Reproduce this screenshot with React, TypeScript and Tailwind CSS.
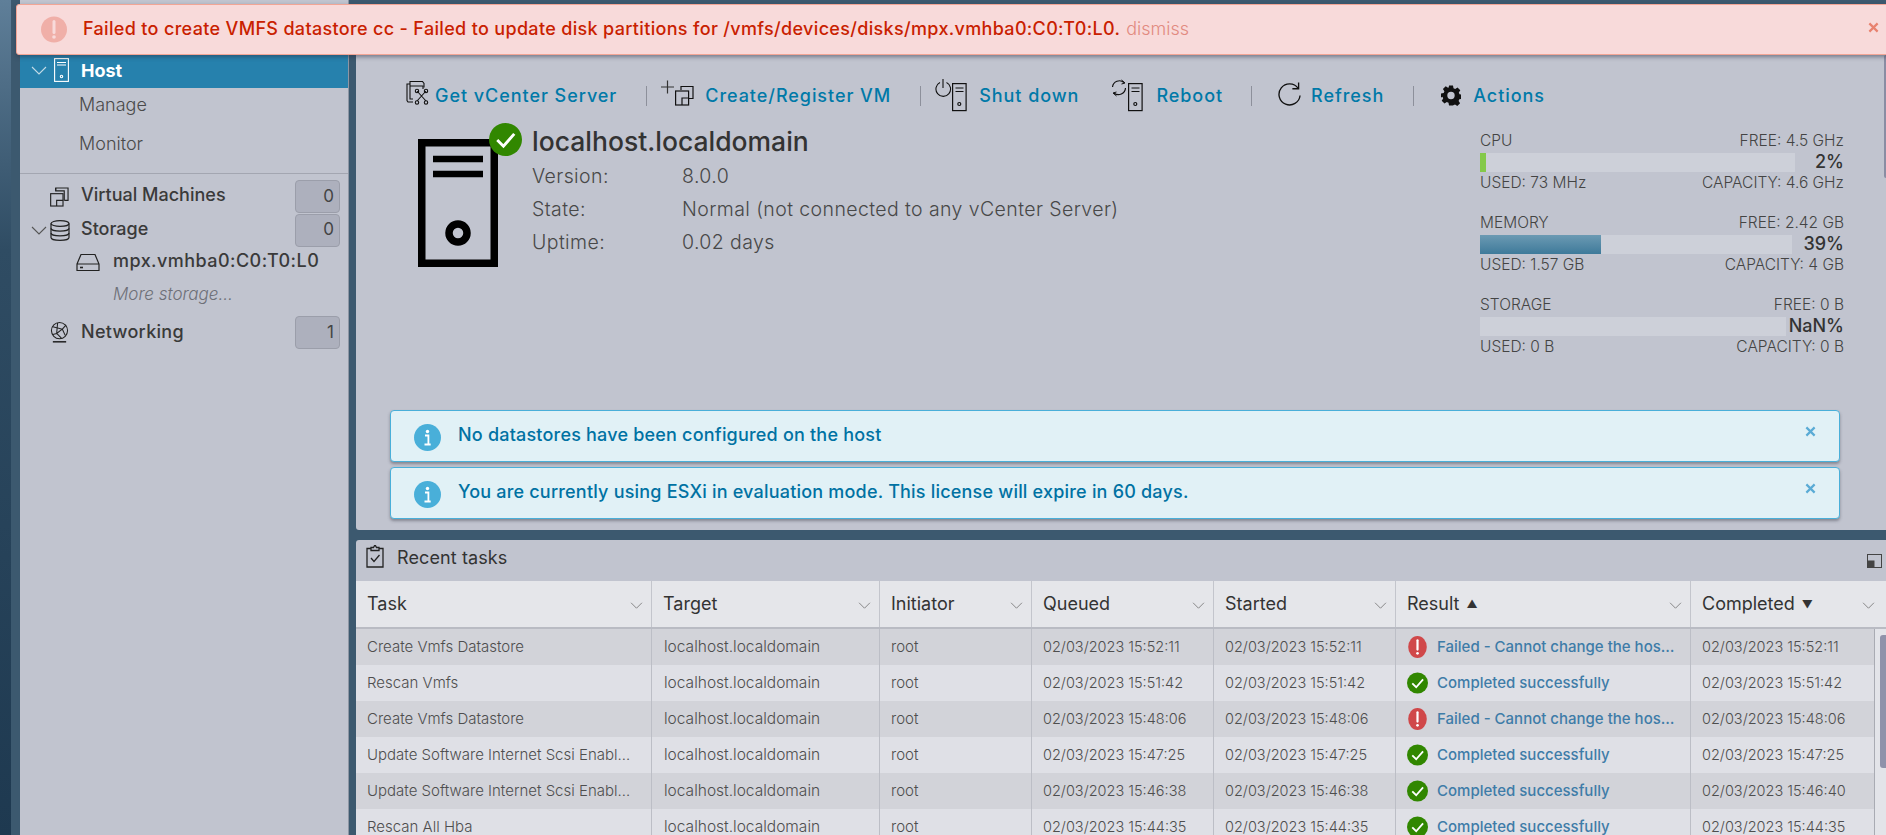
import React from "react";

const rows = [
  ["Create Vmfs Datastore", "02/03/2023 15:52:11", "02/03/2023 15:52:11", "fail", "02/03/2023 15:52:11"],
  ["Rescan Vmfs", "02/03/2023 15:51:42", "02/03/2023 15:51:42", "ok", "02/03/2023 15:51:42"],
  ["Create Vmfs Datastore", "02/03/2023 15:48:06", "02/03/2023 15:48:06", "fail", "02/03/2023 15:48:06"],
  ["Update Software Internet Scsi Enabl…", "02/03/2023 15:47:25", "02/03/2023 15:47:25", "ok", "02/03/2023 15:47:25"],
  ["Update Software Internet Scsi Enabl…", "02/03/2023 15:46:38", "02/03/2023 15:46:38", "ok", "02/03/2023 15:46:40"],
  ["Rescan All Hba", "02/03/2023 15:44:35", "02/03/2023 15:44:35", "ok", "02/03/2023 15:44:35"],
];

function Chevron({ className }: { className: string }) {
  return (
    <svg viewBox="0 0 16 9" className={className} fill="none" stroke="currentColor" strokeWidth="1.1">
      <path d="M1 1l7 7 7-7" />
    </svg>
  );
}

function CheckBadge({ className }: { className: string }) {
  return (
    <svg viewBox="0 0 32 32" className={className}>
      <circle cx="16" cy="16" r="16" fill="#318700" />
      <path d="M8 16.500l6 6 10.500-12" fill="none" stroke="#fff" strokeWidth="2.800" />
    </svg>
  );
}

function FailBadge() {
  return (
    <svg viewBox="0 0 22 26" className="w-[21px] h-[22px] shrink-0">
      <ellipse cx="11" cy="13" rx="11" ry="13" fill="#d0484a" />
      <path d="M11 5v11" stroke="#fff" strokeWidth="2.600" strokeLinecap="round" />
      <circle cx="11" cy="20.500" r="1.600" fill="#fff" />
    </svg>
  );
}

function InfoBadge() {
  return (
    <svg viewBox="0 0 27 27" className="w-[27px] h-[27px] shrink-0">
      <circle cx="13.500" cy="13.500" r="13.500" fill="#49afd9" />
      <circle cx="13.500" cy="7.500" r="1.700" fill="#fff" />
      <path d="M11 11.500h3.400v8.500M10.500 20.500h6.200" fill="none" stroke="#fff" strokeWidth="1.800" />
    </svg>
  );
}

function Close({ className }: { className: string }) {
  return (
    <svg viewBox="0 0 12 12" className={className} fill="none" stroke="currentColor" strokeWidth="2.400">
      <path d="M1.500 1.500l9 9M10.500 1.500l-9 9" />
    </svg>
  );
}

function SmallServer({ x, y }: { x: number; y: number }) {
  return (
    <g transform={`translate(${x} ${y})`} fill="none" stroke="#111" strokeWidth="1.200">
      <rect x="0.600" y="0.600" width="13.500" height="27" />
      <path d="M3.500 5h8M3.500 8.500h8" />
      <circle cx="7.300" cy="21" r="1.500" />
    </g>
  );
}

function VCenterIcon() {
  return (
    <svg viewBox="0 0 25 26" className="w-[25px] h-[26px] -mt-[4px]" fill="none" stroke="#111" strokeWidth="1.100">
      <path d="M5 6V1.500h12.500l1.500 2v4" />
      <path d="M8 22H3l-1-1.500V4h3" />
      <path d="M5 6h13v3M5 6v13h3" />
      <path d="M12 11l9 10M21 11l-9 10" />
      <circle cx="12" cy="11" r="1.700" />
      <circle cx="21" cy="11" r="1.700" />
      <circle cx="12" cy="22.500" r="1.700" />
      <circle cx="21" cy="22.500" r="1.700" />
    </svg>
  );
}

function CreateIcon() {
  return (
    <svg viewBox="0 0 33 29" className="w-[33px] h-[29px] -mt-[3px]" fill="none">
      <path d="M0 8h13M6.500 1.500v13" stroke="#333" strokeWidth="1.200" />
      <g stroke="#111" strokeWidth="1.200">
        <path d="M20 11V7.500h12v12h-4" />
        <rect x="14.600" y="12" width="13" height="14" />
        <path d="M21 26v-7h6.600" />
      </g>
    </svg>
  );
}

function ShutDownIcon() {
  return (
    <svg viewBox="0 0 33 33" className="w-[33px] h-[33px]">
      <path d="M5 3.500A7.300 7.300 0 1 0 11.500 3.500" stroke="#111" strokeWidth="1.100" fill="none" />
      <path d="M8 0v9" stroke="#111" strokeWidth="1.100" />
      <SmallServer x={17} y={4} />
    </svg>
  );
}

function RebootIcon() {
  return (
    <svg viewBox="0 0 33 33" className="w-[33px] h-[33px]">
      <path d="M1.500 8A7 7 0 0 1 13 3.500M14.500 9A7 7 0 0 1 3 14" stroke="#111" strokeWidth="1.200" fill="none" />
      <path d="M10.500 1l3.500 3-3.500 1M5.500 17l-3.500-3 3.500-1" stroke="#111" strokeWidth="1" fill="none" />
      <SmallServer x={17} y={4} />
    </svg>
  );
}

function RefreshIcon() {
  return (
    <svg viewBox="0 0 24 27" className="w-[23px] h-[26px]" fill="none" stroke="#111" strokeWidth="1.400">
      <path d="M21 6.500A11 11 0 1 0 23 14" />
      <path d="M21.500 0.500V7H15" />
    </svg>
  );
}

function GearIcon() {
  return (
    <svg viewBox="0 0 20 20" className="w-[20px] h-[21px]">
      <path
        fill="#111"
        fillRule="evenodd"
        d="M8 0h4l.5 2.700 1.700.7L16.500 1.900l2.800 2.800-1.500 2.300.7 1.700 2.500.500v4l-2.700.5-.7 1.700 1.500 2.300-2.800 2.800-2.300-1.500-1.700.7L12 20H8l-.5-2.700-1.700-.7-2.300 1.500L.7 15.300l1.500-2.300-.7-1.700L0 12V8l2.700-.5.7-1.700L1.900 3.500 4.700.7 7 2.200l.7-.3zM10 6.300a3.700 3.700 0 1 0 0 7.400 3.700 3.700 0 0 0 0-7.400z"
      />
    </svg>
  );
}

function ToolItem({ icon, label, className }: { icon: React.ReactNode; label: string; className: string }) {
  return (
    <div className={`flex items-center ${className}`}>
      {icon}
      <span className="text-[18px] font-medium tracking-[0.95px] text-[#0079a8] whitespace-nowrap">{label}</span>
    </div>
  );
}

function Sep({ className }: { className: string }) {
  return <div className={`w-px h-[20px] bg-[#8d909b] mt-[1px] ${className}`} />;
}

function Badge({ n, className }: { n: number; className?: string }) {
  return (
    <div className={`w-[45px] h-[33px] rounded-[4px] bg-[#adb0bd] border border-[#9b9eaa] flex items-center justify-end pr-[5px] text-[17px] text-[#444] ${className ?? ""}`}>
      {n}
    </div>
  );
}

function Stat(props: { name: string; free: string; pct: string; used: string; cap: string; barW: string; fill?: React.ReactNode }) {
  return (
    <div className="h-[82px] text-[15.5px] font-light leading-[18px] text-[#444]">
      <div className="flex justify-between">
        <span>{props.name}</span>
        <span>{props.free}</span>
      </div>
      <div className="relative h-[20px] mt-[3px] flex items-center justify-end">
        <div className={`absolute left-0 top-0 h-[19px] bg-[#cdd0d9] ${props.barW}`}>{props.fill}</div>
        <span className="relative -mt-[3px] text-[18px] font-medium text-[#333]">{props.pct}</span>
      </div>
      <div className="flex justify-between mt-[1px]">
        <span>{props.used}</span>
        <span>{props.cap}</span>
      </div>
    </div>
  );
}

function Alert({ text, className }: { text: string; className?: string }) {
  return (
    <div className={`h-[52px] rounded-[4px] border border-[#49afd9] bg-[#e1f1f6] shadow-[0_2px_3px_rgba(60,60,70,0.45)] flex items-start pl-[23px] pr-[23px] pt-[13px] ${className ?? ""}`}>
      <InfoBadge />
      <span className="ml-[17px] -mt-[3px] text-[18px] font-medium tracking-[0.2px] text-[#0072a3]">{text}</span>
      <Close className="w-[11px] h-[11px] ml-auto mt-[2px] text-[#5aabd5]" />
    </div>
  );
}

function Th({ label, sort, className }: { label: string; sort?: string; className: string }) {
  return (
    <div className={`flex items-center pl-[11px] pr-[8px] border-r border-[#c3c5cc] ${className}`}>
      <span className="-mt-[2px] text-[18px] text-[#333] whitespace-nowrap">{label}</span>
      {sort && <span className="ml-[7px] text-[11px] text-[#333]">{sort}</span>}
      <Chevron className="w-[13px] h-[7px] ml-auto mt-[2px] text-[#777]" />
    </div>
  );
}

export default function App() {
  return (
    <div className="relative h-screen w-screen overflow-hidden font-[Inter,sans-serif] bg-[#3c596f]">
      {/* error banner sits over the top of the page */}
      <div className="absolute left-[16px] -right-[4px] top-[4px] h-[51px] z-10 bg-[#f8dada] border border-[#f2a595] rounded-[3px] shadow-[0_2px_4px_rgba(40,50,70,0.5)] flex items-center pl-[24px]">
        <svg viewBox="0 0 26 27" className="w-[26px] h-[27px] shrink-0">
          <circle cx="13" cy="13.500" r="13" fill="#f0afa8" />
          <path d="M13 5.500v11" stroke="#f8dada" strokeWidth="3" strokeLinecap="round" />
          <circle cx="13" cy="21" r="1.800" fill="#f8dada" />
        </svg>
        <span className="ml-[16px] -mt-[3px] text-[18px] font-medium tracking-[0.33px] text-[#c92100] whitespace-nowrap">
          Failed to create VMFS datastore cc - Failed to update disk partitions for /vmfs/devices/disks/mpx.vmhba0:C0:T0:L0.
        </span>
        <span className="ml-[6px] -mt-[3px] text-[18px] font-light text-[#e28a80]">dismiss</span>
        <Close className="w-[11px] h-[11px] ml-auto mr-[10px] -mt-[4px] text-[#e8826f]" />
      </div>

      <div className="flex h-full">
        {/* left frame */}
        <div className="w-[11px] shrink-0 bg-gradient-to-b from-[#5f7f99] via-[#2f4c63] via-30% to-[#1e3950]" />
        <div className="w-[9px] shrink-0" />

        {/* navigator */}
        <aside className="w-[329px] shrink-0 h-full pt-[48px] bg-[#c1c4cf] border-r border-[#8e96a4] text-[#3a3a3a]">
          <div className="h-[40px] bg-[#2681ad] flex items-center pl-[11px] pt-[4px]">
            <Chevron className="w-[16px] h-[9px] text-[#c4dbe6]" />
            <svg viewBox="0 0 15 24" className="w-[15px] h-[24px] ml-[7px]" fill="none" stroke="#fff" strokeWidth="1.100">
              <rect x="0.600" y="0.600" width="13.800" height="22.800" />
              <path d="M3 4.500h9M3 7h9" />
              <circle cx="7.500" cy="18.500" r="1.200" />
            </svg>
            <span className="ml-[12px] text-[18px] font-bold text-white">Host</span>
          </div>
          <div className="pl-[59px] text-[18px] font-light text-[#4a4a4a]">
            <div className="h-[33px] flex items-center">Manage</div>
            <div className="h-[44px] flex items-center">Monitor</div>
          </div>
          <div className="mt-[8px] h-px bg-[#a3a6b1]" />
          <div className="pt-[6px]">
            <div className="h-[33px] flex items-center pl-[30px] pr-[8px]">
              <svg viewBox="0 0 20 21" className="w-[19px] h-[20px]" fill="none" stroke="#222" strokeWidth="1.200">
                <path d="M6 4V1h13v13h-4" />
                <path d="M6 1v3h9v10" />
                <rect x="0.700" y="7" width="13" height="13" />
                <path d="M7 20v-6h7" />
              </svg>
              <span className="ml-[12px] -mt-[4px] text-[18px] font-medium">Virtual Machines</span>
              <Badge n={0} className="ml-auto" />
            </div>
            <div className="mt-[1px] h-[32px] flex items-center pl-[11px] pr-[8px]">
              <Chevron className="w-[16px] h-[9px] text-[#555]" />
              <svg viewBox="0 0 20 21" className="w-[20px] h-[21px] ml-[3px]" fill="none" stroke="#222" strokeWidth="1.200">
                <ellipse cx="10" cy="3.500" rx="9" ry="2.900" />
                <path d="M1 3.500v14c0 1.600 4 2.900 9 2.900s9-1.300 9-2.900v-14" />
                <path d="M1 8.200c0 1.600 4 2.900 9 2.900s9-1.300 9-2.900M1 13c0 1.600 4 2.900 9 2.900s9-1.300 9-2.900" />
              </svg>
              <span className="ml-[11px] -mt-[3px] text-[18px] font-medium">Storage</span>
              <Badge n={0} className="ml-auto" />
            </div>
            <div className="h-[32px] flex items-center pl-[56px]">
              <svg viewBox="0 0 24 19" className="w-[24px] h-[19px]" fill="none" stroke="#222" strokeWidth="1.200">
                <path d="M1 11L5 1.500h14L23 11v6.500H1zM1 11h22" />
                <path d="M4 14.500h3" strokeWidth="1.600" />
              </svg>
              <span className="ml-[13px] -mt-[3px] text-[18px] tracking-[0.45px] font-medium whitespace-nowrap">mpx.vmhba0:C0:T0:L0</span>
            </div>
            <div className="h-[33px] flex items-center pl-[93px] text-[17px] font-light italic text-[#6e7078]">More storage…</div>
            <div className="mt-[5px] h-[33px] flex items-center pl-[30px] pr-[8px]">
              <svg viewBox="0 0 20 22" className="w-[19px] h-[21px]" fill="none" stroke="#222" strokeWidth="1.100">
                <circle cx="10" cy="9" r="8.500" />
                <path d="M3 5l10 2.500L17 3M3 13l4-1 6-4.500 3 6.500M7 12l1-11M7 12l5 5" />
                <path d="M3 20.800h14" strokeWidth="1.600" />
              </svg>
              <span className="ml-[12px] -mt-[2px] text-[18px] tracking-[0.3px] font-medium">Networking</span>
              <Badge n={1} className="ml-auto" />
            </div>
          </div>
        </aside>

        <div className="w-[7px] shrink-0" />

        <div className="flex-1 min-w-0 flex flex-col">
          {/* host summary */}
          <section className="relative mt-[4px] h-[526px] shrink-0 bg-[#c1c4cf] rounded-bl-[3px] pt-[75px] overflow-hidden">
            <div className="absolute right-0 top-[51px] w-[2px] h-[123px] rounded-l bg-[#8a8da3]" />
            <div className="flex items-center h-[32px] pl-[49px]">
              <ToolItem icon={<VCenterIcon />} label="Get vCenter Server" className="gap-[5px]" />
              <Sep className="ml-[29px]" />
              <ToolItem icon={<CreateIcon />} label="Create/Register VM" className="ml-[14px] gap-[11px]" />
              <Sep className="ml-[29px]" />
              <ToolItem icon={<ShutDownIcon />} label="Shut down" className="ml-[14px] gap-[11px]" />
              <ToolItem icon={<RebootIcon />} label="Reboot" className="ml-[32px] gap-[12px]" />
              <Sep className="ml-[28px]" />
              <ToolItem icon={<RefreshIcon />} label="Refresh" className="ml-[26px] gap-[10px]" />
              <Sep className="ml-[29px]" />
              <ToolItem icon={<GearIcon />} label="Actions" className="ml-[27px] gap-[12px]" />
            </div>

            <div className="flex mt-[13px]">
              <div className="relative w-[176px] shrink-0 pl-[62px] pt-[15px]">
                <svg viewBox="0 0 80 128" className="w-[80px] h-[128px]" fill="none" stroke="#000" strokeWidth="7.500">
                  <rect x="3.750" y="3.750" width="72.500" height="120.500" />
                  <path d="M15 20h50M15 35h50" strokeWidth="6.500" />
                  <circle cx="40" cy="94" r="9" />
                </svg>
                <CheckBadge className="absolute left-[133px] -top-[1px] w-[33px] h-[33px]" />
              </div>
              <div className="pt-[1px]">
                <div className="text-[26.5px] leading-[32px] font-medium text-[#333]">localhost.localdomain</div>
                <div className="grid grid-cols-[150px_1fr] auto-rows-[33px] items-center mt-[3px] text-[19.5px] tracking-[0.4px] font-light text-[#484848]">
                  <span>Version:</span>
                  <span>8.0.0</span>
                  <span>State:</span>
                  <span>Normal (not connected to any vCenter Server)</span>
                  <span>Uptime:</span>
                  <span>0.02 days</span>
                </div>
              </div>
              <div className="ml-auto w-[364px] mr-[42px] pt-[8px]">
                <Stat
                  name="CPU"
                  free="FREE: 4.5 GHz"
                  pct="2%"
                  used="USED: 73 MHz"
                  cap="CAPACITY: 4.6 GHz"
                  barW="w-[315px]"
                  fill={<div className="h-full w-[6px] bg-[#84c94a]" />}
                />
                <Stat
                  name="MEMORY"
                  free="FREE: 2.42 GB"
                  pct="39%"
                  used="USED: 1.57 GB"
                  cap="CAPACITY: 4 GB"
                  barW="w-[312px]"
                  fill={<div className="h-full w-[121px] bg-gradient-to-b from-[#6b9ab3] to-[#3e7a9a]" />}
                />
                <Stat name="STORAGE" free="FREE: 0 B" pct="NaN%" used="USED: 0 B" cap="CAPACITY: 0 B" barW="w-[306px]" />
              </div>
            </div>

            <div className="absolute left-[34px] w-[1450px] top-[406px] flex flex-col gap-[5px]">
              <Alert text="No datastores have been configured on the host" />
              <Alert text="You are currently using ESXi in evaluation mode. This license will expire in 60 days." />
            </div>
          </section>

          <div className="h-[10px] shrink-0" />

          {/* recent tasks */}
          <section className="flex-1 min-h-0 bg-[#c1c4cf] rounded-tl-[3px] overflow-hidden">
            <div className="h-[41px] flex items-center pl-[10px] pr-[4px]">
              <svg viewBox="0 0 18 23" className="w-[18px] h-[23px] -mt-[8px]" fill="none" stroke="#222" strokeWidth="1.300">
                <path d="M5 3.500H1v18.500h16V3.500h-4" />
                <path d="M5 5.500V2.500h2.500l1-1.800h1l1 1.800H13v3z" />
                <path d="M5 13l3 3.500 5.500-6.500" />
              </svg>
              <span className="ml-[13px] -mt-[6px] text-[18px] tracking-[0.1px] text-[#333]">Recent tasks</span>
              <svg viewBox="0 0 15 14" className="w-[15px] h-[14px] ml-auto">
                <rect x="0.500" y="0.500" width="14" height="13" fill="none" stroke="#444" />
                <rect x="0.500" y="6.500" width="7" height="7" fill="#444" />
              </svg>
            </div>
            <div className="h-[48px] flex bg-[#e5e6ea] border-b-2 border-[#b9bbc3]">
              <Th label="Task" className="w-[296px]" />
              <Th label="Target" className="w-[228px]" />
              <Th label="Initiator" className="w-[152px]" />
              <Th label="Queued" className="w-[182px]" />
              <Th label="Started" className="w-[182px]" />
              <Th label="Result" sort="▲" className="w-[295px]" />
              <div className="flex-1 flex items-center pl-[11px] pr-[11px]">
                <span className="-mt-[2px] text-[18px] text-[#333] whitespace-nowrap">Completed</span>
                <span className="ml-[7px] text-[11px] text-[#333]">▼</span>
                <Chevron className="w-[13px] h-[7px] ml-auto mt-[2px] text-[#777]" />
              </div>
            </div>
            <div className="flex bg-[#e3e4e9]">
              <div className="w-[1519px] shrink-0">
                {rows.map((r, i) => (
                  <div
                    key={i}
                    className={`h-[36px] flex items-center text-[15px] font-light text-[#4e4e4e] ${i % 2 === 0 ? "bg-[#d2d3d9]" : "bg-[#dfe0e6]"}`}
                  >
                    <div className="w-[296px] h-full flex items-center pl-[11px] border-r border-[#bcbec6] whitespace-nowrap">{r[0]}</div>
                    <div className="w-[228px] h-full flex items-center pl-[12px] border-r border-[#bcbec6] text-[15.500px]">localhost.localdomain</div>
                    <div className="w-[152px] h-full flex items-center pl-[11px] border-r border-[#bcbec6]">root</div>
                    <div className="w-[182px] h-full flex items-center pl-[11px] border-r border-[#bcbec6] text-[14.500px]">{r[1]}</div>
                    <div className="w-[182px] h-full flex items-center pl-[11px] border-r border-[#bcbec6] text-[14.500px]">{r[2]}</div>
                    <div className="w-[295px] h-full flex items-center pl-[11px] border-r border-[#bcbec6]">
                      {r[3] === "fail" ? <FailBadge /> : <CheckBadge className="w-[21px] h-[22px] shrink-0" />}
                      <span className="ml-[9px] font-medium text-[#3e7ca8] whitespace-nowrap">
                        {r[3] === "fail" ? "Failed - Cannot change the hos…" : "Completed successfully"}
                      </span>
                    </div>
                    <div className="flex-1 h-full flex items-center pl-[11px] border-r border-[#a9abb3] text-[14.500px]">{r[4]}</div>
                  </div>
                ))}
              </div>
              <div className="flex-1 pl-[5px] pt-[6px]">
                <div className="h-[133px] rounded-l-[3px] bg-[#8f92aa]" />
              </div>
            </div>
          </section>
        </div>
      </div>
    </div>
  );
}
